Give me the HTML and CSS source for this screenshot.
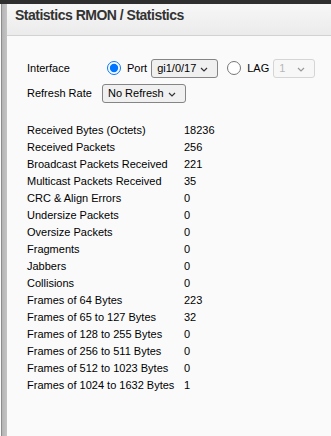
FILE: index.html
```html
<!DOCTYPE html>
<html lang="en">
<head>
<meta charset="UTF-8">
<meta name="viewport" content="width=device-width, initial-scale=1.0">
<title>Statistics RMON</title>
<link rel="stylesheet" href="styles.css">
</head>
<body>

<div class="topbar"></div>
<div class="page">
    <div class="edge"></div>
    <div class="main">
        <div class="header">
            <h1>Statistics RMON / Statistics</h1>
        </div>
        <div class="content">
            <div class="form-row">
                <span class="form-label">Interface</span>
                <label class="radio"><input type="radio" name="iface" checked> Port</label>
                <span class="sel-wrap sel-port">
                    <select class="sel">
                        <option>gi1/0/17</option>
                    </select>
                    <svg class="chev" width="8" height="5" viewBox="0 0 8 5"><path d="M1 1l3 3 3-3" fill="none" stroke="#333" stroke-width="1.2"/></svg>
                </span>
                <label class="radio radio-lag"><input type="radio" name="iface"> LAG</label>
                <span class="sel-wrap sel-lag">
                    <select class="sel" disabled>
                        <option>1</option>
                        <option>2</option>
                    </select>
                    <svg class="chev" width="8" height="5" viewBox="0 0 8 5"><path d="M1 1l3 3 3-3" fill="none" stroke="#999" stroke-width="1.2"/></svg>
                </span>
            </div>
            <div class="form-row">
                <span class="form-label label-refresh">Refresh Rate</span>
                <span class="sel-wrap sel-refresh">
                    <select class="sel">
                        <option>No Refresh</option>
                        <option>15 Sec</option>
                    </select>
                    <svg class="chev" width="8" height="5" viewBox="0 0 8 5"><path d="M1 1l3 3 3-3" fill="none" stroke="#333" stroke-width="1.2"/></svg>
                </span>
            </div>

            <!-- counters -->
            <table class="stats">
                <tr><td>Received Bytes (Octets)</td><td>18236</td></tr>
                <tr><td>Received Packets</td><td>256</td></tr>
                <tr><td>Broadcast Packets Received</td><td>221</td></tr>
                <tr><td>Multicast Packets Received</td><td>35</td></tr>
                <tr><td>CRC &amp; Align Errors</td><td>0</td></tr>
                <tr><td>Undersize Packets</td><td>0</td></tr>
                <tr><td>Oversize Packets</td><td>0</td></tr>
                <tr><td>Fragments</td><td>0</td></tr>
                <tr><td>Jabbers</td><td>0</td></tr>
                <tr><td>Collisions</td><td>0</td></tr>
                <tr><td>Frames of 64 Bytes</td><td>223</td></tr>
                <tr><td>Frames of 65 to 127 Bytes</td><td>32</td></tr>
                <tr><td>Frames of 128 to 255 Bytes</td><td>0</td></tr>
                <tr><td>Frames of 256 to 511 Bytes</td><td>0</td></tr>
                <tr><td>Frames of 512 to 1023 Bytes</td><td>0</td></tr>
                <tr><td>Frames of 1024 to 1632 Bytes</td><td>1</td></tr>
            </table>
        </div>
    </div>
</div>

</body>
</html>
```

FILE: styles.css
```css
html, body {
    height: 100%;
}
body {
    font-family: "Liberation Sans", Arial, sans-serif;
    font-size: 11px;
    color: #000;
    margin: 0;
    padding: 0;
    background-color: #fafafa;
    display: flex;
    flex-direction: column;
}
.topbar {
    height: 4px;
    background-color: #2f2f2f;
}
.page {
    flex: 1;
    display: flex;
    background-color: #fafafa;
}
.edge {
    width: 6px;
    margin-left: 1px;
    background: linear-gradient(to right, #8c8c8c 0, #8c8c8c 1px, #b4b4b4 1px, #c4c4c4 100%);
}
.main {
    flex: 1;
}
.header {
    height: 31px;
    padding-left: 8px;
    background: linear-gradient(to bottom, #f7f7f7, #ebebeb);
    border-bottom: 1px solid #d2d2d2;
}
.header h1 {
    margin: 0;
    padding-top: 3px;
    font-size: 14px;
    letter-spacing: -0.5px;
    font-weight: bold;
    color: #333;
}
.content {
    padding: 22px 0 0 20px;
}
.form-row {
    display: flex;
    align-items: center;
    height: 20px;
    margin-bottom: 5px;
}
.form-label {
    width: 80px;
}
.label-refresh {
    width: 75px;
}
.radio {
    display: flex;
    align-items: center;
    margin-right: 4px;
}
.radio input {
    width: 14px;
    height: 14px;
    margin: 0 6px 0 0;
}
.radio-lag {
    margin-left: 9px;
}
.sel-wrap {
    position: relative;
    display: inline-block;
}
.sel {
    appearance: none;
    -webkit-appearance: none;
    font-family: "Liberation Sans", Arial, sans-serif;
    font-size: 11px;
    color: #000;
    height: 19px;
    padding: 0 0 0 5px;
    margin: 0;
    border: 1px solid #858585;
    border-radius: 3px;
    background-color: #f0f0f0;
    display: block;
}
.sel:disabled {
    color: #9a9a9a;
    border-color: #c6c6c6;
    background-color: #f6f6f6;
}
.sel-port .sel {
    width: 67px;
}
.sel-lag .sel {
    width: 42px;
}
.sel-refresh .sel {
    width: 84px;
}
.chev {
    position: absolute;
    right: 10px;
    top: 8px;
    pointer-events: none;
}
.stats {
    margin-top: 19px;
    border-collapse: collapse;
}
.stats td {
    padding: 0;
    height: 17px;
    line-height: 17px;
}
.stats td:first-child {
    width: 157px;
}
```
